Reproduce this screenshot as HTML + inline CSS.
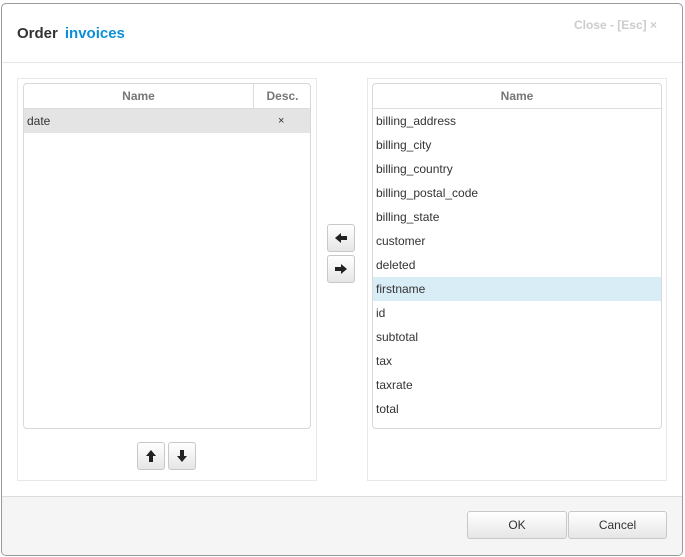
<!DOCTYPE html><html><head><style>
body{margin:0;width:685px;height:557px;background:#fff;font-family:"Liberation Sans",sans-serif;position:relative;overflow:hidden}
.dlg{position:absolute;left:1px;top:3px;width:680px;height:551px;border:1px solid #999;border-radius:5px;overflow:hidden;background:#fff}
.a{position:absolute}
.title{left:15px;top:21px;font-size:15px;font-weight:bold;color:#333}
.title span{color:#0d8fd8;margin-left:7px}
.close{right:25px;top:14px;font-size:12px;font-weight:bold;color:#ccc}
.hl{left:0;top:58px;width:100%;height:1px;background:#e5e5e5}
.outer{border:1px solid #e8e8e8}
.tbl{border:1px solid #d8d8d8;border-radius:4px;background:#fff;overflow:hidden}
.th{height:24px;border-bottom:1px solid #ddd;font-size:12px;font-weight:bold;color:#777;text-align:center;line-height:24px}
.row{height:24px;line-height:24px;font-size:12px;color:#333;padding-left:3px}
.btn{border:1px solid #c8c8c8;border-radius:3px;background:linear-gradient(#fff,#e6e6e6);box-sizing:border-box;text-align:center;font-size:12px;color:#333}
.foot{left:0;top:492px;width:100%;height:60px;background:#f5f5f5;border-top:1px solid #ddd}
</style></head><body><div class="dlg">
<div class="a title">Order<span>invoices</span></div>
<div class="a close">Close - [Esc] ×</div>
<div class="a hl"></div>
<div class="a outer" style="left:15px;top:74px;width:298px;height:401px"></div>
<div class="a tbl" style="left:21px;top:79px;width:286px;height:344px">
<div class="th"><span style="position:absolute;left:0;width:229px">Name</span><span style="position:absolute;left:229px;width:57px;border-left:1px solid #ddd;height:24px">Desc.</span></div>
<div class="row" style="background:#e4e4e4;position:relative">date<span style="position:absolute;left:254px;font-size:11px">×</span></div>
</div>
<div class="a btn" style="left:135px;top:438px;width:28px;height:28px"><svg width="12" height="14" viewBox="0 0 12 14" style="margin-top:6px"><path d="M6 1L1 7H4V13H8V7H11Z" fill="#222"/></svg></div>
<div class="a btn" style="left:166px;top:438px;width:28px;height:28px"><svg width="12" height="14" viewBox="0 0 12 14" style="margin-top:6px"><path d="M6 13L1 7H4V1H8V7H11Z" fill="#222"/></svg></div>
<div class="a btn" style="left:325px;top:220px;width:28px;height:28px"><svg width="14" height="12" viewBox="0 0 14 12" style="margin-top:7px"><path d="M1 6L7 1V4H13V8H7V11Z" fill="#222"/></svg></div>
<div class="a btn" style="left:325px;top:251px;width:28px;height:28px"><svg width="14" height="12" viewBox="0 0 14 12" style="margin-top:7px"><path d="M13 6L7 1V4H1V8H7V11Z" fill="#222"/></svg></div>
<div class="a outer" style="left:365px;top:74px;width:298px;height:401px"></div>
<div class="a tbl" style="left:370px;top:79px;width:288px;height:344px">
<div class="th">Name</div>
<div class="row">billing_address</div><div class="row">billing_city</div><div class="row">billing_country</div><div class="row">billing_postal_code</div><div class="row">billing_state</div><div class="row">customer</div><div class="row">deleted</div><div class="row" style="background:#d9edf7">firstname</div><div class="row">id</div><div class="row">subtotal</div><div class="row">tax</div><div class="row">taxrate</div><div class="row">total</div>
</div>
<div class="a foot"></div>
<div class="a btn" style="left:465px;top:507px;width:100px;height:28px;line-height:26px">OK</div>
<div class="a btn" style="left:566px;top:507px;width:99px;height:28px;line-height:26px">Cancel</div>
</div></body></html>
